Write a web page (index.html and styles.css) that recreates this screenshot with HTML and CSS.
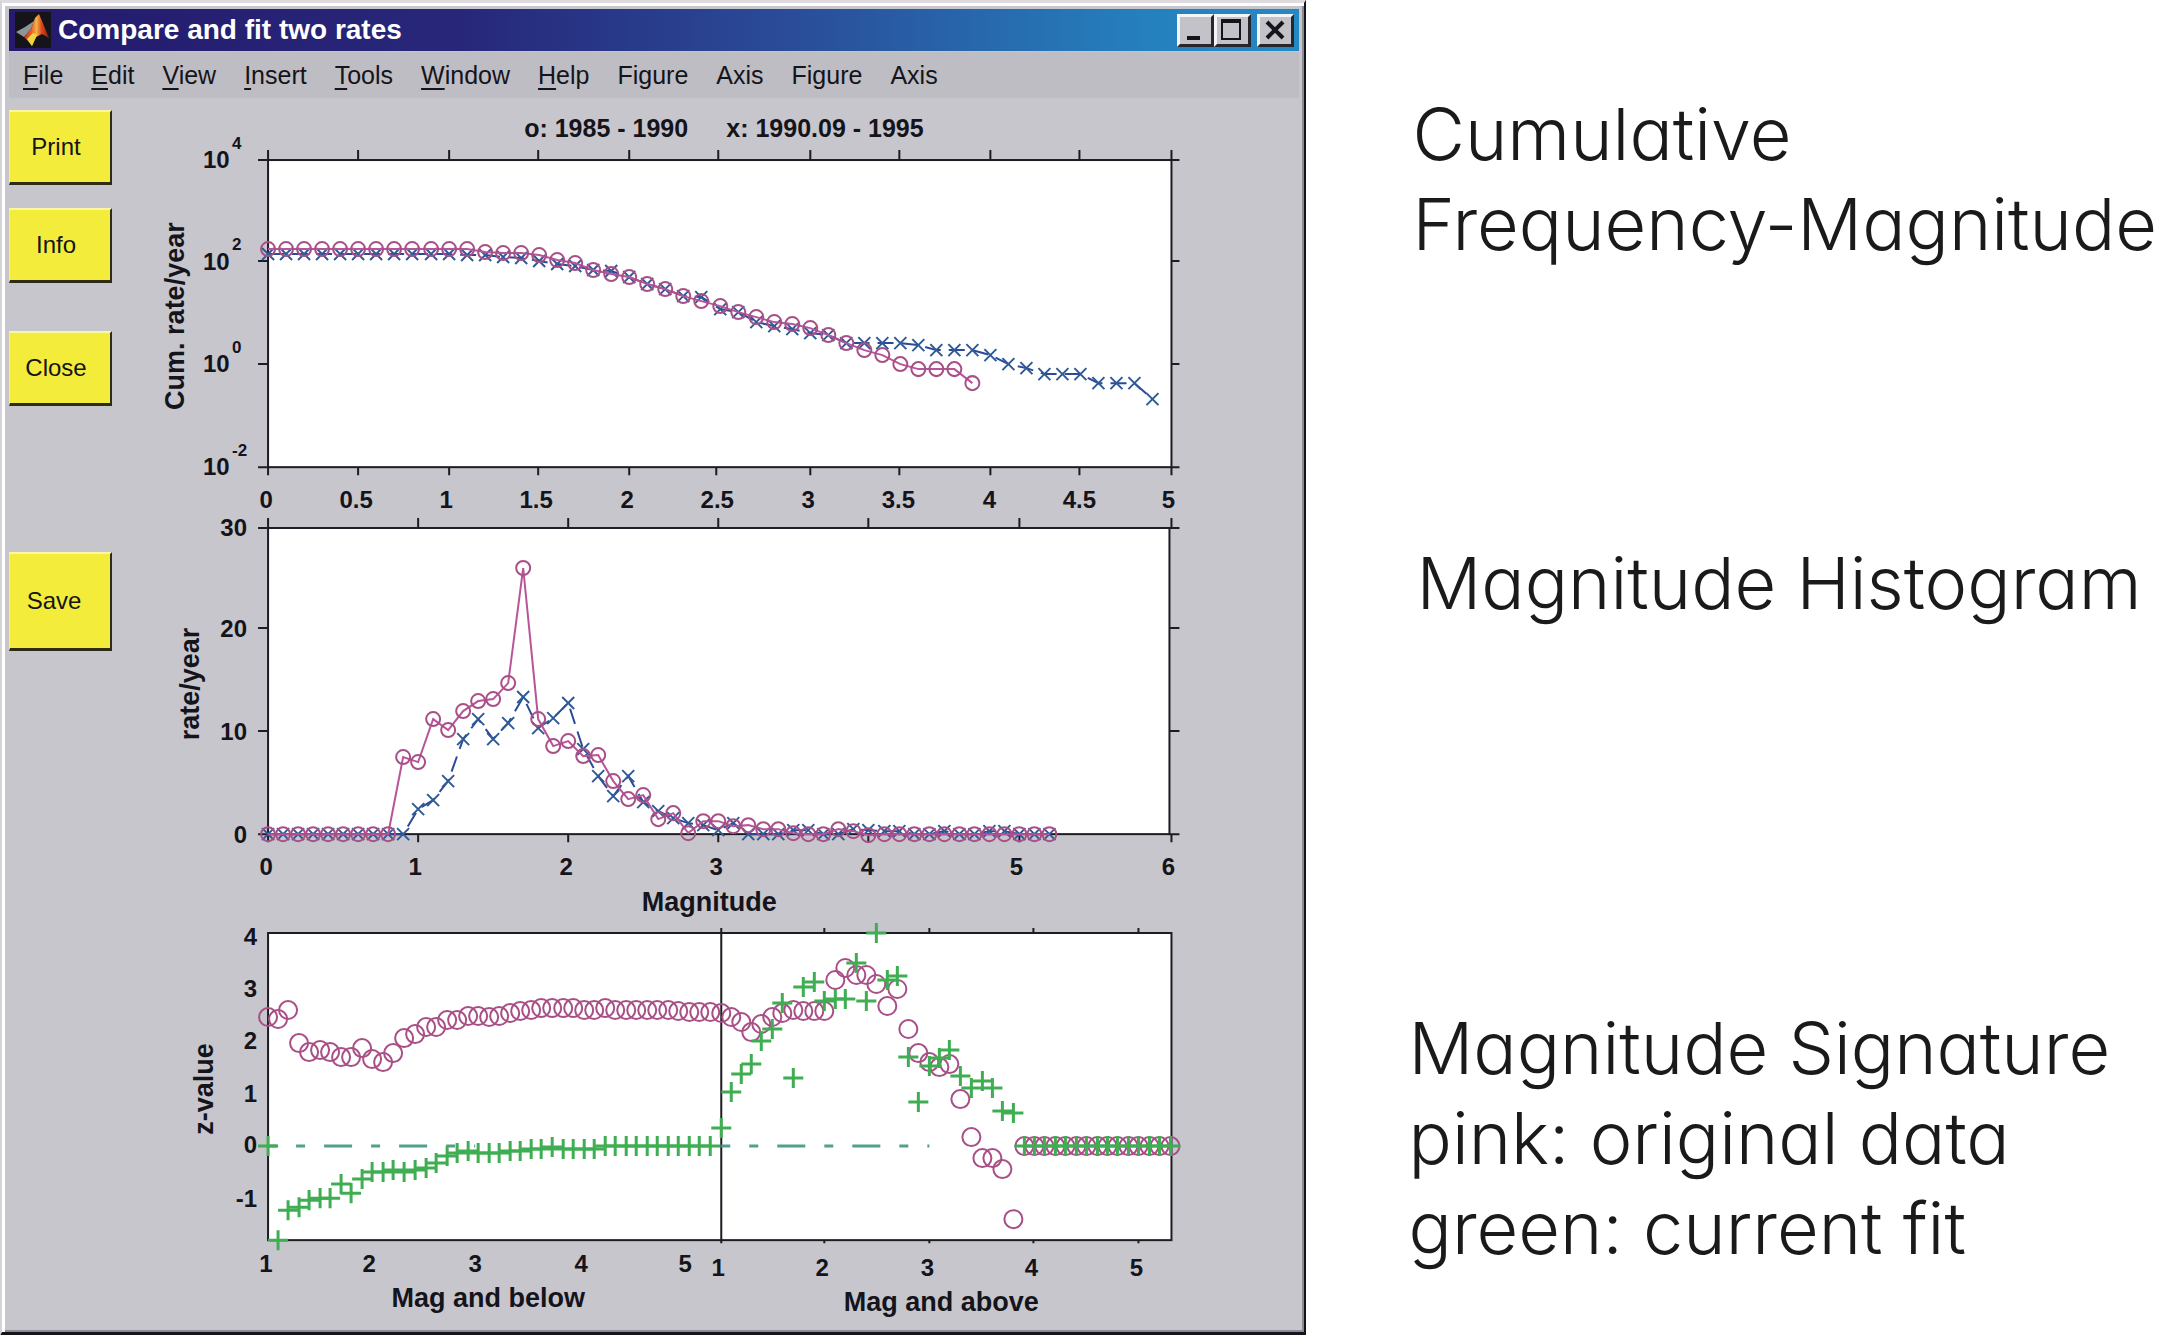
FILE: index.html
```html
<!DOCTYPE html>
<html lang="en">
<head>
<meta charset="utf-8">
<title>Compare and fit two rates</title>
<link rel="stylesheet" href="styles.css">
</head>
<body>
<main class="page">
  <section class="window">
    <header class="titlebar">
      <svg class="logo" viewBox="0 0 36 36" aria-hidden="true">
        <defs>
          <linearGradient id="membrane" x1="0" y1="0" x2="1" y2="0">
            <stop offset="0" stop-color="#c23a1c"/>
            <stop offset="0.3" stop-color="#e8602a"/>
            <stop offset="0.5" stop-color="#f4b04a"/>
            <stop offset="0.7" stop-color="#dc4a1c"/>
            <stop offset="1" stop-color="#8c1a14"/>
          </linearGradient>
        </defs>
        <rect width="36" height="36" fill="#14141a"/>
        <path d="M1 20 L10 15 L19 9 L16 17 L9 25 Z" fill="#8b9796"/>
        <path d="M9 25 L16 17 L20 6 L24 2 L27 9 L34 26 L27 22 L21 25 L17 34 L12 28 Z" fill="url(#membrane)"/>
        <path d="M12 27 L18 21 L22 23 L17 34 Z" fill="#ecd83c"/>
      </svg>
      <h1 class="title">Compare and fit two rates</h1>
      <div class="controls">
        <button class="control" type="button" aria-label="Minimize"><svg viewBox="0 0 30 26"><path d="M7 21h13" stroke-width="4"/></svg></button>
        <button class="control" type="button" aria-label="Maximize"><svg viewBox="0 0 30 26"><path d="M4 4h20" stroke-width="4"/><path d="M5 3v19h18V3" stroke-width="2"/></svg></button>
        <button class="control control-close" type="button" aria-label="Close window"><svg viewBox="0 0 30 26"><path d="M7 5l16 16M23 5L7 21" stroke-width="4"/></svg></button>
      </div>
    </header>

    <nav class="menubar">
      <button type="button"><u>F</u>ile</button>
      <button type="button"><u>E</u>dit</button>
      <button type="button"><u>V</u>iew</button>
      <button type="button"><u>I</u>nsert</button>
      <button type="button"><u>T</u>ools</button>
      <button type="button"><u>W</u>indow</button>
      <button type="button"><u>H</u>elp</button>
      <button type="button">Figure</button>
      <button type="button">Axis</button>
      <button type="button">Figure</button>
      <button type="button">Axis</button>
    </nav>

    <div class="figure">
      <div class="actions">
        <button class="action" type="button">Print</button>
        <button class="action action-info" type="button">Info</button>
        <button class="action action-close" type="button">Close</button>
        <button class="action action-save" type="button">Save</button>
      </div>

      <div class="plots">
        <svg class="plot" viewBox="150 98 1148 417" role="img" aria-label="Cumulative rate per year by magnitude">
          <defs>
            <marker id="ring" viewBox="-12 -12 24 24" markerWidth="24" markerHeight="24" markerUnits="userSpaceOnUse"><circle r="7" class="ring"/></marker>
            <marker id="cross" viewBox="-12 -12 24 24" markerWidth="24" markerHeight="24" markerUnits="userSpaceOnUse"><path d="M-6-6L6 6M6-6L-6 6" class="cross"/></marker>
            <marker id="big-ring" viewBox="-12 -12 24 24" markerWidth="24" markerHeight="24" markerUnits="userSpaceOnUse"><circle r="9" class="ring"/></marker>
            <marker id="plus" viewBox="-12 -12 24 24" markerWidth="24" markerHeight="24" markerUnits="userSpaceOnUse"><path d="M-10 0H10M0-10V10" class="plus"/></marker>
          </defs>
          <rect class="area" x="268" y="160" width="903" height="307"/>
          <path class="axis" d="M268 150V160M358 150V160M449 150V160M538 150V160M629 150V160M718 150V160M810 150V160M899 150V160M990 150V160M1079 150V160M1171 150V160M268 467V475M358 467V475M449 467V475M538 467V475M629 467V475M716 467V475M810 467V475M899 467V475M990 467V475M1079 467V475M1171 467V475M258 160H268M258 261H268M258 364H268M258 467H268M1171 160H1179M1171 261H1179M1171 364H1179M1171 467H1179"/>
          <text class="label small" x="524" y="137">o: 1985 - 1990</text>
          <text class="label small" x="726" y="137">x: 1990.09 - 1995</text>
          <g class="tick">
            <text x="203" y="168">10</text><text x="203" y="270">10</text><text x="203" y="372">10</text><text x="203" y="475">10</text>
          </g>
          <g class="power">
            <text x="232" y="149">4</text><text x="232" y="250">2</text><text x="232" y="353">0</text><text x="232" y="456">-2</text>
          </g>
          <g class="tick mid">
            <text x="266" y="508">0</text><text x="356" y="508">0.5</text><text x="446" y="508">1</text><text x="536" y="508">1.5</text><text x="627" y="508">2</text><text x="717" y="508">2.5</text><text x="808" y="508">3</text><text x="898" y="508">3.5</text><text x="989" y="508">4</text><text x="1079" y="508">4.5</text><text x="1168" y="508">5</text>
          </g>
          <text class="label mid" transform="translate(184 316) rotate(-90)">Cum. rate/year</text>
          <polyline class="line-x" points="268,254 286,254 304,254 322,254 340,254 358,254 376,254 394,254 412,254 431,254 449,254 467,255 485,255 503,257 521,258 539,261 557,264 575,266 593,270 611,271 629,277 647,284 665,289 683,296 701,297 720,309 738,312 756,322 774,326 792,329 810,333 828,335 846,343 864,343 882,343 900,343 918,345 936,350 954,350 972,350 990,355 1008,364 1026,368 1044,374 1062,374 1080,374 1098,383 1116,383 1134,383 1152,399"/>
          <polyline class="line-o" points="268,249 286,249 304,249 322,249 340,249 358,249 376,249 394,249 412,249 431,249 449,249 467,249 485,252 503,253 521,253 539,255 557,260 575,263 593,270 611,274 629,277 647,284 665,289 683,296 701,301 720,306 738,312 756,317 774,322 792,324 810,328 828,335 846,343 864,350 882,355 900,364 918,369 936,369 954,369 972,383"/>
        </svg>

        <svg class="plot" viewBox="150 515 1148 405" role="img" aria-label="Rate per year by magnitude">
          <rect class="area" x="268" y="528" width="901" height="306"/>
          <path class="axis" d="M268 518V528M418 518V528M568 518V528M718 518V528M868 518V528M1019 518V528M1171 518V528M268 834V842M418 834V842M568 834V842M718 834V842M868 834V842M1019 834V842M1171 834V842M258 528H268M258 628H268M258 731H268M258 834H268M1169 528H1179M1169 628H1179M1169 731H1179M1169 834H1179"/>
          <g class="tick end">
            <text x="247" y="536">30</text><text x="247" y="637">20</text><text x="247" y="740">10</text><text x="247" y="843">0</text>
          </g>
          <g class="tick mid">
            <text x="266" y="875">0</text><text x="415" y="875">1</text><text x="566" y="875">2</text><text x="716" y="875">3</text><text x="867" y="875">4</text><text x="1016" y="875">5</text><text x="1168" y="875">6</text>
          </g>
          <text class="label mid" transform="translate(199 684) rotate(-90)">rate/year</text>
          <text class="label mid" x="709" y="911">Magnitude</text>
          <polyline class="line-x" points="268,834 283,834 298,834 313,834 328,834 343,834 358,834 373,834 388,834 403,834 418,809 433,800 448,781 463,739 478,719 493,739 508,723 523,697 538,728 553,718 568,703 583,749 598,776 613,796 628,776 643,802 658,811 673,818 688,823 703,825 718,830 733,823 748,834 763,834 778,834 793,830 808,830 823,834 838,834 853,829 868,830 884,831 899,831 914,834 929,834 944,831 959,834 974,834 989,831 1004,831 1019,834 1034,834 1049,834"/>
          <polyline class="line-o" points="268,834 283,834 298,834 313,834 328,834 343,834 358,834 373,834 388,834 403,757 418,762 433,719 448,730 463,711 478,701 493,699 508,683 523,568 538,719 553,746 568,741 583,756 598,755 613,781 628,799 643,795 658,819 673,813 688,833 703,821 718,821 733,826 748,825 763,829 778,829 793,833 808,834 823,834 838,829 853,831 868,835 884,834 899,834 914,834 929,834 944,834 959,834 974,834 989,834 1004,834 1019,834 1034,834 1049,834"/>
        </svg>

        <svg class="plot" viewBox="150 920 1148 407" role="img" aria-label="z-value signature for magnitudes below and above">
          <rect class="area" x="268" y="933" width="903" height="307"/>
          <path class="axis" d="M721 928V1243M824 928V933M929 928V933M1033 928V933M1138 928V933M824 1240V1243M929 1240V1243M1033 1240V1243M1138 1240V1243"/>
          <g class="tick end">
            <text x="257" y="945">4</text><text x="257" y="997">3</text><text x="257" y="1049">2</text><text x="257" y="1102">1</text><text x="257" y="1153">0</text><text x="257" y="1207">-1</text>
          </g>
          <g class="tick mid">
            <text x="266" y="1272">1</text><text x="369" y="1272">2</text><text x="475" y="1272">3</text><text x="581" y="1272">4</text><text x="685" y="1272">5</text>
            <text x="718" y="1276">1</text><text x="822" y="1276">2</text><text x="927" y="1276">3</text><text x="1031" y="1276">4</text><text x="1136" y="1276">5</text>
          </g>
          <text class="label mid" transform="translate(213 1089) rotate(-90)">z-value</text>
          <text class="label mid" x="488" y="1307">Mag and below</text>
          <text class="label mid" x="941" y="1311">Mag and above</text>
          <path class="zero" d="M268 1146H475M721 1146H929"/>
          <polyline class="dots-o" points="268,1017 278,1019 288,1010 299,1043 309,1052 320,1050 330,1052 341,1057 351,1057 362,1048 372,1059 383,1062 393,1053 404,1038 415,1034 426,1027 436,1027 447,1020 457,1020 468,1016 478,1016 489,1017 499,1016 510,1013 520,1011 531,1010 541,1008 552,1008 563,1008 573,1008 584,1010 594,1010 605,1008 615,1010 626,1010 636,1010 647,1010 657,1010 668,1010 678,1011 689,1012 699,1012 710,1012 721,1013"/>
          <polyline class="dots-o" points="731,1017 741,1022 751,1032 761,1024 772,1017 782,1013 793,1010 803,1011 814,1011 824,1011 835,980 845,968 856,975 866,975 876,984 887,1006 897,989 908,1029 918,1053 929,1062 939,1067 949,1064 960,1099 971,1137 982,1158 992,1158 1002,1169 1013,1219 1024,1146 1034,1146 1044,1146 1055,1146 1065,1146 1076,1146 1086,1146 1097,1146 1107,1146 1117,1146 1128,1146 1138,1146 1149,1146 1159,1146 1170,1146"/>
          <polyline class="dots-plus" points="268,1146 278,1240 288,1210 299,1207 309,1200 320,1198 330,1198 341,1184 351,1193 362,1179 372,1172 383,1172 393,1170 404,1172 415,1170 426,1168 436,1163 447,1156 457,1153 468,1151 478,1153 489,1153 499,1153 510,1151 520,1151 531,1149 541,1149 552,1147 563,1149 573,1149 584,1149 594,1149 605,1146 615,1146 626,1146 636,1146 647,1146 657,1146 668,1146 678,1146 689,1146 699,1146 710,1146"/>
          <polyline class="dots-plus" points="721,1128 731,1092 741,1074 751,1064 761,1041 772,1029 782,1003 793,1078 803,987 814,982 824,1001 835,999 845,999 856,963 866,1001 876,933 887,980 897,976 908,1057 918,1102 929,1066 939,1058 949,1050 960,1076 971,1088 982,1081 992,1088 1002,1111 1013,1113 1024,1146 1034,1146 1044,1146 1055,1146 1065,1146 1076,1146 1086,1146 1097,1146 1107,1146 1117,1146 1128,1146 1138,1146 1149,1146 1159,1146 1170,1146"/>
        </svg>
      </div>
    </div>
  </section>

  <aside class="notes">
    <p class="note">Cumulative<br>Frequency-Magnitude</p>
    <p class="note note-histogram">Magnitude Histogram</p>
    <p class="note note-signature">Magnitude Signature<br>pink: original data<br>green: current fit</p>
  </aside>
</main>
</body>
</html>
```
FILE: styles.css
```css
* { box-sizing: border-box; }

body {
  margin: 0;
  background: #fff;
  color: #14141a;
  font-family: "Liberation Sans", Arial, sans-serif;
  overflow-x: hidden;
}

button {
  margin: 0;
  padding: 0;
  border: 0;
  background: none;
  color: inherit;
  font: inherit;
}

.page {
  display: grid;
  grid-template-columns: 1307fr 850fr;
  align-items: start;
}

/* Application window */
.window {
  min-width: 0;
  padding: 6px 5px 4px 7px;
  border-style: solid;
  border-width: 3px 2px 4px 2px;
  border-color: #dfdadd #14141a #14141a #d4d3d9;
  background: #c7c6cd;
  box-shadow: inset 3px 3px 0 #fff, inset -2px -2px 0 #8c8b93;
}

.titlebar {
  display: flex;
  align-items: center;
  height: 42px;
  padding: 0 5px 0 6px;
  background: linear-gradient(90deg, #251a6c 0%, #27277a 35%, #2a4b98 60%, #2580bd 88%, #2389c4 100%);
}

.logo {
  width: 36px;
  height: 36px;
}

.title {
  margin: 0 auto 0 7px;
  color: #fff;
  font-size: 28px;
  line-height: 42px;
  font-weight: bold;
}

.controls {
  display: flex;
}

.control {
  width: 37px;
  height: 33px;
  border-style: solid;
  border-width: 3px;
  border-color: #f4f4f4 #26262c #26262c #f4f4f4;
  background: #c3c2c8;
}

.control-close { margin-left: 6px; }

.control svg {
  display: block;
  width: 30px;
  height: 26px;
  fill: none;
  stroke: #14141a;
}

.menubar {
  display: flex;
  gap: 28px;
  height: 47px;
  padding: 0 14px;
  border-top: 1px solid #b9c9cc;
  background: #bebdc3;
  font-size: 25px;
}

.menubar u {
  text-decoration-thickness: 2px;
  text-underline-offset: 4px;
}

/* Figure: action buttons beside the stacked plots */
.figure {
  display: grid;
  grid-template-columns: 141px 1fr;
}

.actions {
  display: flex;
  flex-direction: column;
  align-items: flex-start;
  padding-top: 12px;
}

.action {
  width: 103px;
  height: 75px;
  padding-right: 8px;
  border-style: solid;
  border-width: 2px 2px 3px 1px;
  border-color: #fbf6a4 #2e2c14 #2e2c14 #f6ef7a;
  background: #f3ec3a;
  font-size: 24px;
}

.action-info { margin-top: 23px; }
.action-close { margin-top: 48px; }

.action-save {
  height: 99px;
  margin-top: 146px;
  padding-right: 12px;
}

.plot {
  display: block;
  width: 100%;
  height: auto;
}

.area {
  fill: #fff;
  stroke: #1c1c22;
  stroke-width: 2;
}

.axis {
  fill: none;
  stroke: #1c1c22;
  stroke-width: 2;
}

.plot text {
  fill: #14141a;
  font-weight: bold;
}

.tick { font-size: 24px; }
.power { font-size: 17px; }
.label { font-size: 27px; }
.label.small { font-size: 25px; }
.mid { text-anchor: middle; }
.end { text-anchor: end; }

/* Series */
.ring,
.cross,
.plus,
.line-x,
.line-o {
  fill: none;
}

.ring {
  stroke: #a84f86;
  stroke-width: 2;
}

.cross {
  stroke: #2f5a96;
  stroke-width: 2;
}

.plus {
  stroke: #3fae52;
  stroke-width: 3;
}

.line-x {
  stroke: #2b4a98;
  stroke-width: 2;
  stroke-dasharray: 16 8;
  marker: url(#cross);
}

.line-o {
  stroke: #b8559a;
  stroke-width: 2;
  marker: url(#ring);
}

.dots-o {
  fill: none;
  marker: url(#big-ring);
}

.dots-plus {
  fill: none;
  marker: url(#plus);
}

.zero {
  fill: none;
  stroke: #4fa08c;
  stroke-width: 3;
  stroke-dasharray: 28 19 9 19;
  stroke-dashoffset: 19;
}

/* Captions beside the plots */
.notes {
  padding: 89px 0 0 107px;
  color: #1a1a1a;
  font-family: Inter, sans-serif;
  font-size: 72px;
  font-weight: 300;
  line-height: 90px;
  font-feature-settings: "cv11";
  white-space: nowrap;
}

.note { margin: 0; }

.note-histogram {
  margin-top: 269px;
  margin-left: 4px;
}

.note-signature {
  margin-top: 375px;
  margin-left: -4px;
}
```
